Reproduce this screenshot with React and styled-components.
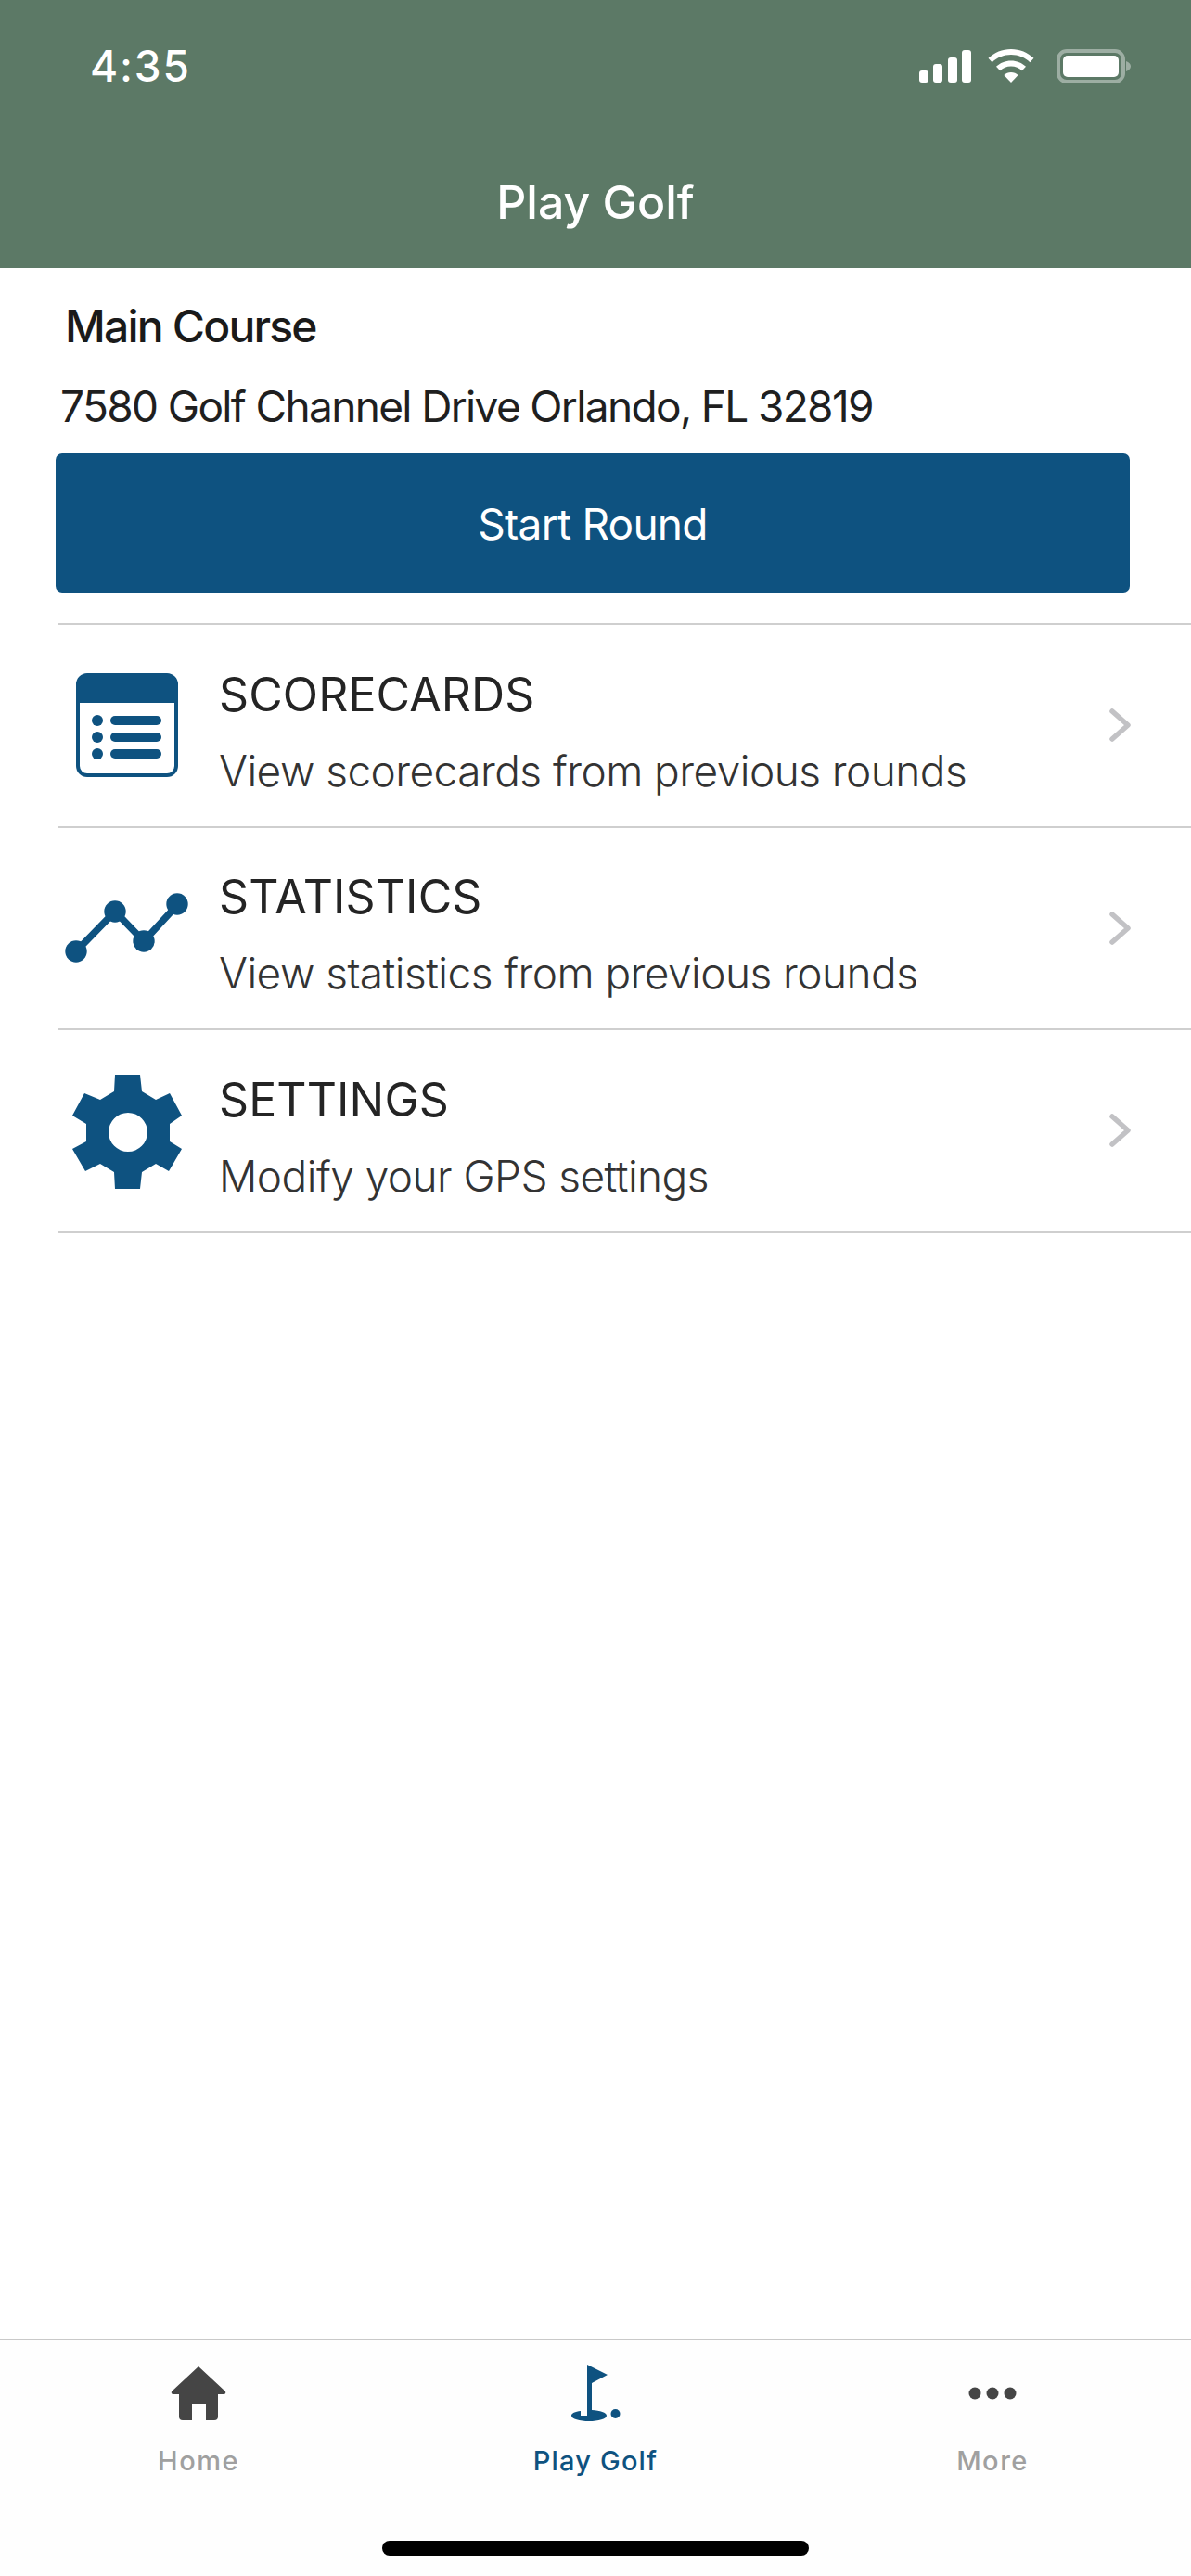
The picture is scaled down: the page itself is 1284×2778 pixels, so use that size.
import React from "react";
import styled, { createGlobalStyle } from "styled-components";

const Global = createGlobalStyle`
  html, body { margin: 0; padding: 0; background: #fff; }
  #root { width: 1284px; height: 2778px; }
  * { box-sizing: border-box; }
`;

const Screen = styled.div`
  width: 1284px;
  height: 2778px;
  display: flex;
  flex-direction: column;
  font-family: Inter, "Liberation Sans", sans-serif;
  background: #fff;
`;

const Header = styled.header`
  height: 289px;
  flex: none;
  background: #5c7966;
  color: #fff;
  display: flex;
  flex-direction: column;
`;

const StatusBar = styled.div`
  display: flex;
  justify-content: space-between;
  align-items: center;
  height: 70px;
  margin-top: 36px;
  padding: 0 65px 0 97px;
`;

const Time = styled.span`
  font-size: 46px;
  font-weight: 500;
  letter-spacing: 1.8px;
  line-height: 70px;
`;

const StatusIcons = styled.div`
  display: flex;
  align-items: center;
`;

const WifiSlot = styled.span`
  display: flex;
  margin: 0 24px 0 18px;
`;

const Title = styled.h1`
  margin: 0;
  margin-top: 82px;
  text-align: center;
  font-size: 50px;
  font-weight: 500;
  line-height: 60px;
`;

const Course = styled.section`
  padding: 0 66px 0 60px;
  display: flex;
  flex-direction: column;
`;

const CourseName = styled.h2`
  margin: 34px 0 0 10px;
  font-size: 48px;
  font-weight: 500;
  letter-spacing: -1.8px;
  line-height: 58px;
  color: #1a1a1a;
`;

const Address = styled.p`
  margin: 28px 0 0 5px;
  font-size: 46px;
  font-weight: 400;
  letter-spacing: -1.65px;
  line-height: 58px;
  color: #1f1f1f;
`;

const StartButton = styled.button`
  margin-top: 22px;
  height: 150px;
  padding: 2px 0 0;
  border: 0;
  border-radius: 7px;
  background: #0e5280;
  color: #fff;
  font-family: inherit;
  font-size: 46px;
  font-weight: 400;
  letter-spacing: -0.75px;
`;

const Menu = styled.nav`
  margin: 33px 0 0 62px;
  border-top: 2px solid #cfcfcf;
`;

const Row = styled.div`
  height: 218.6px;
  display: flex;
  align-items: center;
  border-bottom: 2px solid #cfcfcf;
`;

const IconCell = styled.div`
  width: 174px;
  flex: none;
  display: flex;
  justify-content: center;
  padding-right: 24px;
`;

const RowText = styled.div`
  flex: 1;
  display: flex;
  flex-direction: column;
  padding-top: 13px;
`;

const RowTitle = styled.div`
  font-size: 50px;
  font-weight: 400;
  line-height: 60px;
  letter-spacing: 0.1px;
  color: #242424;
`;

const RowSub = styled.div`
  margin-top: 24px;
  font-size: 46px;
  font-weight: 300;
  line-height: 56px;
  letter-spacing: -0.55px;
  color: #333;
`;

const Chevron = styled.div`
  flex: none;
  width: 100px;
  display: flex;
  justify-content: flex-start;
  padding-left: 11px;
`;

const TabBar = styled.footer`
  margin-top: auto;
  height: 256px;
  border-top: 2px solid #c9c9c9;
  display: flex;
  flex-direction: column;
  background: #fefefe;
`;

const Tabs = styled.div`
  display: grid;
  grid-template-columns: repeat(3, 428px);
  padding-top: 25px;
`;

const Tab = styled.div`
  display: flex;
  flex-direction: column;
  align-items: center;
`;

const TabIcon = styled.div`
  height: 64px;
  display: flex;
  align-items: center;
  justify-content: center;
`;

const TabLabel = styled.span`
  margin-top: 23px;
  font-size: 29px;
  font-weight: 500;
  letter-spacing: ${(p) => (p.$active ? "1.2px" : "1.5px")};
  line-height: 36px;
  color: ${(p) => (p.$active ? "#0e5280" : "#a0a0a0")};
`;

const HomeBar = styled.div`
  width: 460px;
  height: 16px;
  margin: 68px auto 0;
  border-radius: 8px;
  background: #000;
`;

const Signal = () => (
  <svg width="56" height="35" viewBox="0 0 56 35" fill="#fff">
    <rect x="0" y="22" width="10" height="13" rx="3" />
    <rect x="15" y="15" width="10" height="20" rx="3" />
    <rect x="31" y="8" width="10" height="27" rx="3" />
    <rect x="46" y="0" width="10" height="35" rx="3" />
  </svg>
);

const Wifi = () => (
  <svg width="50" height="36" viewBox="0 0 50 36" fill="#fff">
    <path d="M25 0C34.5 0 43 3.7 49.5 9.8L45.4 14.2C40 9.2 32.9 6.1 25 6.1S10 9.2 4.6 14.2L.5 9.8C7 3.7 15.5 0 25 0Z" />
    <path d="M25 12.5C31.2 12.5 36.8 14.9 41 18.8L36.8 23.2C33.7 20.3 29.6 18.6 25 18.6S16.3 20.3 13.2 23.2L9 18.8C13.2 14.9 18.8 12.5 25 12.5Z" />
    <path d="M25 25C28 25 30.6 26.1 32.6 28L25 36L17.4 28C19.4 26.1 22 25 25 25Z" />
  </svg>
);

const Battery = () => (
  <svg width="80" height="37" viewBox="0 0 80 37" fill="none">
    <rect x="2" y="2" width="70" height="33" rx="9" stroke="#fff" strokeOpacity="0.4" strokeWidth="4" />
    <rect x="7" y="7" width="60" height="23" rx="5" fill="#fff" />
    <path d="M75 13C78 14 80 16 80 18.5S78 23 75 24Z" fill="#fff" fillOpacity="0.4" />
  </svg>
);

const ScorecardIcon = () => (
  <svg width="110" height="112" viewBox="0 0 110 112" fill="#0e5280">
    <path fillRule="evenodd" d="M12 0H98A12 12 0 0 1 110 12V100A12 12 0 0 1 98 112H12A12 12 0 0 1 0 100V12A12 12 0 0 1 12 0ZM4 32V100A8 8 0 0 0 12 108H98A8 8 0 0 0 106 100V32Z" />
    <circle cx="23" cy="51" r="6" />
    <circle cx="23" cy="69" r="6" />
    <circle cx="23" cy="87" r="6" />
    <rect x="37" y="46" width="55" height="10" rx="5" />
    <rect x="37" y="64" width="55" height="10" rx="5" />
    <rect x="37" y="82" width="55" height="10" rx="5" />
  </svg>
);

const StatsIcon = () => (
  <svg width="134" height="76" viewBox="0 0 134 76" fill="#0e5280">
    <path d="M12 63L54 20L85 52L122 12" fill="none" stroke="#0e5280" strokeWidth="7.5" />
    <circle cx="12" cy="63" r="11.7" />
    <circle cx="54" cy="20" r="11.7" />
    <circle cx="85" cy="52" r="11.7" />
    <circle cx="121" cy="12" r="11.7" />
  </svg>
);

const GearIcon = () => (
  <svg width="119" height="128" viewBox="0 -4 119 128" fill="#0e5280">
    <path
      fillRule="evenodd"
      d="M46 0H73L75 18L90 27L105 20L118 44L105 53V72L118 80L104 104L90 96L75 105L73 123H46L45 105L30 96L14 104L0 80L15 72V53L0 44L13 20L30 27L45 18ZM60 41A21 21 0 1 0 60 83A21 21 0 1 0 60 41Z"
    />
  </svg>
);

const ChevronIcon = () => (
  <svg width="26" height="38" viewBox="0 0 26 38" fill="none">
    <path d="M4 4L21 19L4 34" stroke="#c2c2c5" strokeWidth="5.5" strokeLinecap="round" strokeLinejoin="round" />
  </svg>
);

const HomeIcon = () => (
  <svg width="60" height="60" viewBox="0 0 60 60" fill="#454545">
    <path d="M30 1L59 28Q60 31 57 31H51V55Q51 59 47 59H38V42H23V59H13Q9 59 9 55V31H3Q0 31 1 28Z" />
  </svg>
);

const FlagIcon = () => (
  <svg width="54" height="62" viewBox="0 0 54 62" fill="#0e5280">
    <path fillRule="evenodd" d="M18 0L40 11L23 20V49C32 49.5 39 51.5 39 55S30 61 20 61S1 58.5 1 55C1 52.5 5 50.5 11 50V55H18Z" />
    <circle cx="48.5" cy="53" r="5" />
  </svg>
);

const DotsIcon = () => (
  <svg width="52" height="14" viewBox="0 0 52 14" fill="#454545">
    <circle cx="7" cy="7" r="6.5" />
    <circle cx="26" cy="7" r="6.5" />
    <circle cx="45" cy="7" r="6.5" />
  </svg>
);

const items = [
  { icon: <ScorecardIcon />, title: "SCORECARDS", sub: "View scorecards from previous rounds" },
  { icon: <StatsIcon />, title: "STATISTICS", sub: "View statistics from previous rounds" },
  { icon: <GearIcon />, title: "SETTINGS", sub: "Modify your GPS settings" },
];

const tabs = [
  { icon: <HomeIcon />, label: "Home" },
  { icon: <FlagIcon />, label: "Play Golf", active: true },
  { icon: <DotsIcon />, label: "More" },
];

export default function App() {
  return (
    <Screen>
      <Global />
      <Header>
        <StatusBar>
          <Time>4:35</Time>
          <StatusIcons>
            <Signal />
            <WifiSlot>
              <Wifi />
            </WifiSlot>
            <Battery />
          </StatusIcons>
        </StatusBar>
        <Title>Play Golf</Title>
      </Header>
      <Course>
        <CourseName>Main Course</CourseName>
        <Address>7580 Golf Channel Drive Orlando, FL 32819</Address>
        <StartButton>Start Round</StartButton>
      </Course>
      <Menu>
        {items.map((it) => (
          <Row key={it.title}>
            <IconCell>{it.icon}</IconCell>
            <RowText>
              <RowTitle>{it.title}</RowTitle>
              <RowSub>{it.sub}</RowSub>
            </RowText>
            <Chevron>
              <ChevronIcon />
            </Chevron>
          </Row>
        ))}
      </Menu>
      <TabBar>
        <Tabs>
          {tabs.map((t) => (
            <Tab key={t.label}>
              <TabIcon>{t.icon}</TabIcon>
              <TabLabel $active={t.active}>{t.label}</TabLabel>
            </Tab>
          ))}
        </Tabs>
        <HomeBar />
      </TabBar>
    </Screen>
  );
}
